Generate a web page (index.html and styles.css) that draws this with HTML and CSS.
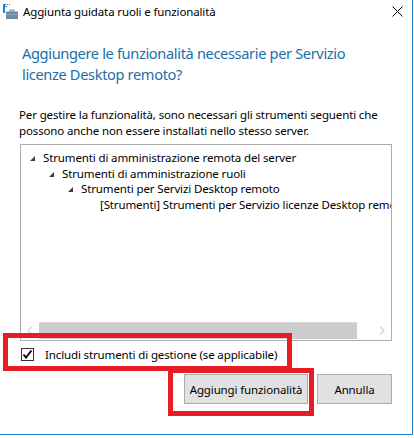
FILE: index.html
```html
<!DOCTYPE html>
<html lang="it">
<head>
<meta charset="utf-8">
<title>Aggiunta guidata ruoli e funzionalità</title>
<link rel="stylesheet" href="styles.css">
</head>
<body>
<div class="window">
  <div class="titlebar">
    <svg class="app-icon" width="16" height="16" viewBox="0 0 16 16">
      <rect x="0" y="0" width="2" height="9" fill="#1f7fd6"/>
      <rect x="2" y="0" width="1" height="1" fill="#1f7fd6"/>
      <rect x="4" y="0" width="1" height="1" fill="#1f7fd6"/>
      <rect x="6" y="0" width="1" height="1" fill="#1f7fd6"/>
      <rect x="2" y="2" width="2" height="1" fill="#1f7fd6"/>
      <rect x="7" y="6" width="4" height="2" fill="none" stroke="#6d8aa3" stroke-width="1"/>
      <rect x="3" y="7.5" width="12" height="7.5" fill="#6d8aa3"/>
      <rect x="3" y="10" width="12" height="1" fill="#8fa8bd"/>
    </svg>
    <span class="title">Aggiunta guidata ruoli e funzionalità</span>
    <svg class="close" width="11" height="11" viewBox="0 0 11 11">
      <path d="M0.5 0.5 L10.5 10.5 M10.5 0.5 L0.5 10.5" stroke="#000" stroke-width="1"/>
    </svg>
  </div>
  <div class="content">
    <h1 class="instruction">Aggiungere le funzionalità necessarie per Servizio<br>licenze Desktop remoto?</h1>
    <p class="desc">Per gestire la funzionalità, sono necessari gli strumenti seguenti che<br>possono anche non essere installati nello stesso server.</p>
    <div class="tree">
      <ul class="tree-list">
        <li class="node lvl0"><span class="exp"></span>Strumenti di amministrazione remota del server</li>
        <li class="node lvl1"><span class="exp"></span>Strumenti di amministrazione ruoli</li>
        <li class="node lvl2"><span class="exp"></span>Strumenti per Servizi Desktop remoto</li>
        <li class="node lvl3"><span class="noexp"></span>[Strumenti] Strumenti per Servizio licenze Desktop remoto</li>
      </ul>
      <div class="hscroll">
        <svg class="arrow" width="6" height="9" viewBox="0 0 6 9"><path d="M5 0.5 L1 4.5 L5 8.5" fill="none" stroke="#bcbcbc" stroke-width="1"/></svg>
        <div class="track"><div class="thumb"></div></div>
        <svg class="arrow" width="6" height="9" viewBox="0 0 6 9"><path d="M1 0.5 L5 4.5 L1 8.5" fill="none" stroke="#a6a6a6" stroke-width="1"/></svg>
      </div>
    </div>
    <label class="check">
      <span class="box">
        <svg width="11" height="11" viewBox="0 0 11 11"><path d="M1.5 5.5 L4 8.5 L9.5 1.5" fill="none" stroke="#000" stroke-width="1.8"/></svg>
      </span>
      <span>Includi strumenti di gestione (se applicabile)</span>
    </label>
    <div class="buttons">
      <button class="btn btn-add">Aggiungi funzionalità</button>
      <button class="btn btn-cancel">Annulla</button>
    </div>
  </div>
  <div class="mark mark-check"></div>
  <div class="mark mark-add"></div>
</div>
</body>
</html>
```
FILE: styles.css
```css
* { box-sizing: border-box; }
html, body { margin: 0; padding: 0; background: #fff; }
body {
  font-family: "Segoe UI", "Noto Sans", "Open Sans", sans-serif;
  font-size: 11.5px;
  letter-spacing: -0.13px;
  color: #000;
}
.window {
  position: relative;
  width: 413px;
  height: 435px;
  background: #fff;
  border-right: 1px solid #1883d7;
  border-bottom: 1px solid #1883d7;
  display: flex;
  flex-direction: column;
}
.titlebar {
  height: 30px;
  display: flex;
  align-items: center;
  padding: 0 0 7px 3px;
}
.app-icon { margin-right: 4px; flex: none; }
.title {
  flex: 1;
  white-space: nowrap;
}
.close { margin-right: 9px; }
.content {
  flex: 1;
  padding: 13px 21px 0 20px;
  display: flex;
  flex-direction: column;
}
.instruction {
  margin: 0 0 0 2px;
  font-weight: normal;
  font-size: 14.6px;
  line-height: 20.5px;
  color: #1a6fa8;
  letter-spacing: -0.35px;
  white-space: nowrap;
}
.desc {
  margin: 23px 0 0 -1px;
  line-height: 16px;
  white-space: nowrap;
}
.tree {
  margin-top: 5px;
  width: 372px;
  height: 197px;
  border: 1px solid #adadad;
  display: flex;
  flex-direction: column;
  overflow: hidden;
}
.tree-list {
  list-style: none;
  margin: 0;
  padding: 5px 0 0 0;
  flex: 1;
}
.node {
  height: 15.7px;
  line-height: 15.7px;
  white-space: nowrap;
  display: flex;
  align-items: center;
}
.lvl0 { padding-left: 9px; }
.lvl1 { padding-left: 28px; }
.lvl2 { padding-left: 47px; }
.lvl3 { padding-left: 66px; }
.exp {
  width: 0; height: 0;
  border-left: 5px solid transparent;
  border-bottom: 5px solid #404040;
  margin-right: 8px;
  margin-top: 1px;
  flex: none;
}
.noexp { width: 13px; flex: none; }
.hscroll {
  height: 17px;
  display: flex;
  align-items: center;
  margin-bottom: 1px;
}
.hscroll .arrow { flex: none; margin: 0 6px 0 6px; }
.track { flex: 1; height: 17px; display: flex; }
.thumb {
  width: 318px;
  height: 17px;
  background: #cdcdcd;
  border-top: 1px dotted #e8e8e8;
}
.check {
  display: flex;
  align-items: center;
  margin-top: 6px;
  height: 15px;
}
.box {
  width: 13px; height: 13px;
  border: 1px solid #333;
  display: flex;
  align-items: center;
  justify-content: center;
  margin: 0 11px 0 1px;
  background: #fff;
}
.buttons {
  display: flex;
  justify-content: flex-end;
  gap: 9px;
  margin-top: 12px;
  width: 372px;
}
.btn {
  font-family: inherit;
  font-size: 11.5px;
  letter-spacing: -0.13px;
  height: 30px;
  background: #e1e1e1;
  border: 1px solid #adadad;
  color: #000;
  padding: 0;
}
.btn-add { width: 124px; }
.btn-cancel { width: 75px; }
.mark {
  position: absolute;
  border: 5px solid #e81c24;
  pointer-events: none;
}
.mark-check { left: 3px; top: 333px; width: 289px; height: 38px; }
.mark-add { left: 168px; top: 368px; width: 146px; height: 48px; }
```
